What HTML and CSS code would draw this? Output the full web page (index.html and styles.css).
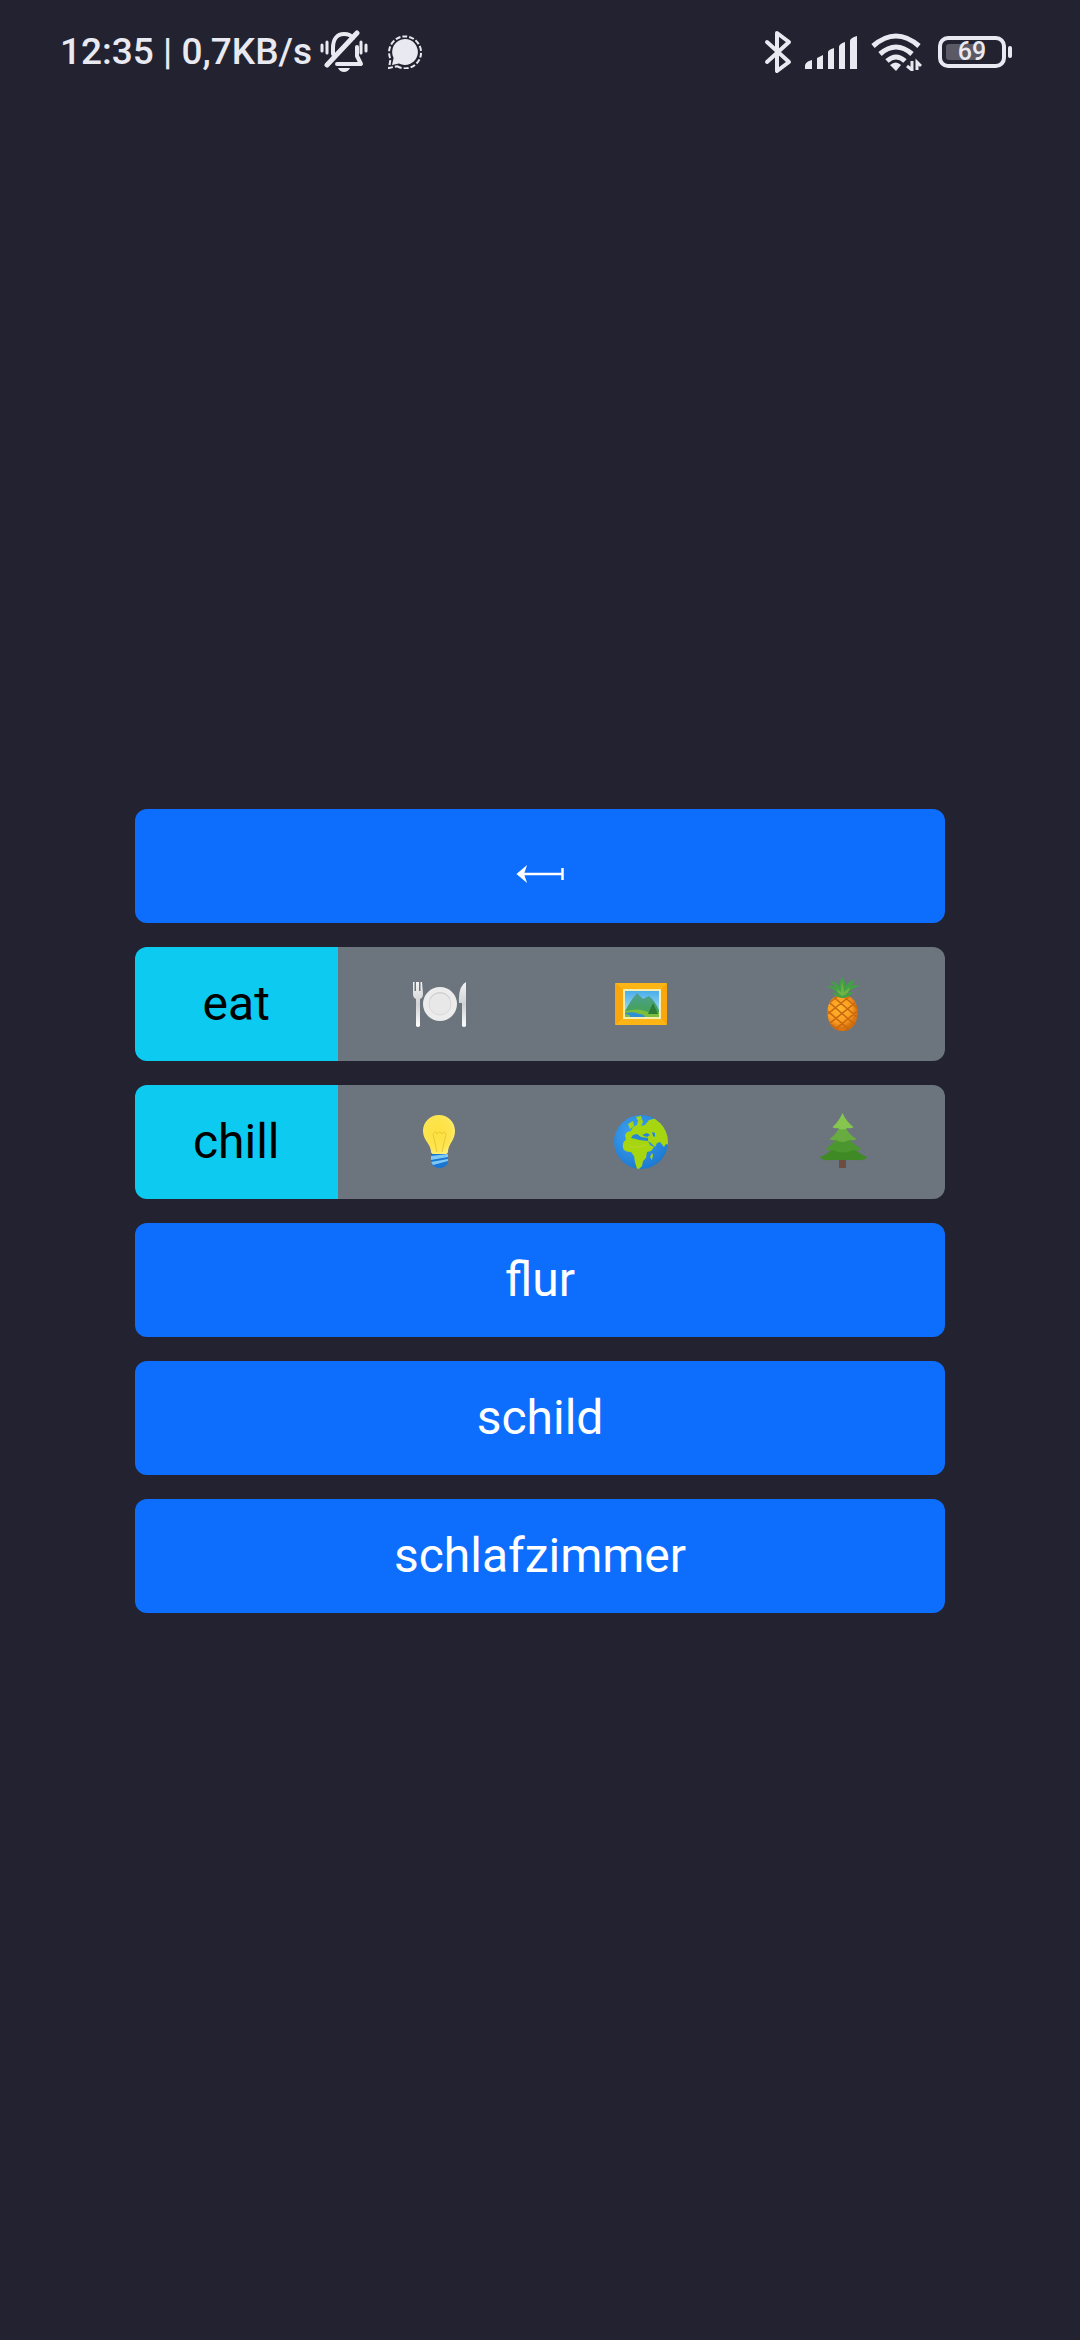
FILE: index.html
```html
<!DOCTYPE html>
<html lang="de">
<head>
<meta charset="utf-8">
<meta name="viewport" content="width=device-width, initial-scale=1">
<title>Licht</title>
<link rel="stylesheet" href="styles.css">
</head>
<body>
<header class="status">
  <div class="status-side">
    <span class="status-text">12:35 | 0,7KB/s</span>
    <svg class="bell" width="48" height="44" viewBox="0 0 48 44" fill="none" stroke="#e9e9f1" stroke-width="4" stroke-linecap="round" stroke-linejoin="round" aria-hidden="true">
      <path d="M13 24V18C13 9 17 4 24 4c4 0 7 1 9 4M37 17v9l4 8H17"/>
      <path d="M7 35 37 3" stroke-width="5"/>
      <path d="M2 15v6M7 12v11M41 12v11M46 15v6" stroke-width="3"/>
      <path d="M18 38h12q-2 4-6 4t-6-4z" fill="#e9e9f1" stroke="none"/>
    </svg>
    <svg class="chat" width="34" height="34" viewBox="0 0 34 34" aria-hidden="true">
      <path d="M17 4a13 13 0 1 1-6 24.600L4 30l1.600-7A13 13 0 0 1 17 4z" fill="#e9e9f1"/>
      <path d="M9 31.200A16 16 0 1 0 2.500 24L1 33z" fill="none" stroke="#e9e9f1" stroke-width="2" stroke-dasharray="5 2"/>
    </svg>
  </div>
  <div class="status-side">
    <svg width="28" height="44" viewBox="0 0 28 44" fill="none" stroke="#e9e9f1" stroke-width="4" stroke-linejoin="round" stroke-linecap="round" aria-hidden="true">
      <path d="M3 12 25 32 13 41V3l12 9L3 32"/>
    </svg>
    <svg class="signal" width="54" height="34" viewBox="0 0 54 34" fill="#e9e9f1" aria-hidden="true">
      <path d="M1 31q0-3 4-5l3-1v9H1zM13 23l6-3v14h-6zM24 17q0-2 6-4v21h-6zM35 12q0-3 6-5v27h-6zM46 6q0-3 7-5v33h-7z"/>
    </svg>
    <svg class="wifi" width="52" height="38" viewBox="0 0 52 38" fill="none" stroke="#e9e9f1" stroke-width="5" aria-hidden="true">
      <path d="M3 13Q26-7 49 13M10 21Q26 7 42 21M17 28Q26 20 35 28"/>
      <path d="M20 32q6-5 11 0l-5 6z" fill="#e9e9f1" stroke="none"/>
      <path d="M42 28v9l-5-4M47 37V29l4 4" stroke-width="3"/>
    </svg>
    <div class="battery">
      <span class="battery-case"><span class="battery-level"></span><span class="battery-text">69</span></span>
      <span class="battery-tip"></span>
    </div>
  </div>
</header>

<main class="menu">
  <button class="btn primary" type="button" aria-label="Back">
    <svg class="icon" viewBox="0 0 60 60" fill="none" stroke="#fff" stroke-width="2" aria-hidden="true">
      <path d="M10 38h42M52.500 32v12" stroke-width="2.500"/><path d="M8 38l7-6-2 6 2 6z" fill="#fff"/>
    </svg>
  </button>

  <div class="group">
    <button class="btn info" type="button">eat</button>
    <button class="btn secondary" type="button" aria-label="Plate">
      <svg class="icon" viewBox="0 0 60 60" aria-hidden="true">
        <defs><linearGradient id="steel" x2="0" y2="1"><stop stop-color="#f4f4f4"/><stop offset=".5" stop-color="#cfd1d3"/><stop offset="1" stop-color="#fff"/></linearGradient></defs>
        <path d="M4 8h1.500v9h1.500V8h3v9h1.500V8H13l1 12q0 4-3 5v27q-2 2-4 0V25q-3-1-3-5z" fill="url(#steel)"/>
        <circle cx="31" cy="30" r="17" fill="#ececec"/>
        <circle cx="31" cy="30" r="11" fill="#e8e8e8" stroke="#dadada"/>
        <path d="M21 25a11 11 0 0 1 20 0" fill="none" stroke="#cecece"/>
        <path d="M57 8v44q-2 2-4 0V29h-3q-1-17 7-21z" fill="url(#steel)"/>
      </svg>
    </button>
    <button class="btn secondary" type="button" aria-label="Picture">
      <svg class="icon" viewBox="0 0 60 60" aria-hidden="true">
        <defs><linearGradient id="sky" x2="0" y2="1"><stop stop-color="#4aaeea"/><stop offset="1" stop-color="#b9e5f5"/></linearGradient>
        <linearGradient id="hill" x2="0" y2="1"><stop stop-color="#4f9f94"/><stop offset="1" stop-color="#3fa447"/></linearGradient></defs>
        <rect x="4" y="9" width="52" height="42" rx="1" fill="#fdb515"/>
        <path d="M4 9l8 6v29l-8 7zM56 9l-6 6v29l6 7z" fill="#f9a60f"/>
        <rect x="12" y="15" width="38" height="30" fill="#f6edb0"/>
        <rect x="14" y="17" width="34" height="26" fill="url(#sky)"/>
        <path d="M14 37q5-9 8-13l4-5 6 6 6-3q6 5 10 14v7H14z" fill="url(#hill)"/>
        <path d="M14 37q14-3 20 0t14 1v5H14z" fill="#7cbd3e"/>
        <path d="M14 39q10-2 14 1 5 0 6 3H19q2-2-5-3z" fill="#2f8fd4"/>
        <path d="M42 29l5 11H37z" fill="#2c7a36"/>
      </svg>
    </button>
    <button class="btn secondary" type="button" aria-label="Pineapple">
      <svg class="icon" viewBox="0 0 60 60" aria-hidden="true">
        <defs><radialGradient id="fruit" cx=".4" cy=".4"><stop stop-color="#ffb62c"/><stop offset=".7" stop-color="#fb9c20"/><stop offset="1" stop-color="#d9740f"/></radialGradient>
        <clipPath id="body"><path d="M28.500 21c10 0 15 7 15 17 0 11-5 19-15 19s-15-8-15-19c0-10 5-17 15-17z"/></clipPath></defs>
        <g clip-path="url(#body)"><path d="M12 20h34v38H12z" fill="url(#fruit)"/>
        <path d="M10 44l16 14M10 34l28 24M10 24l36 31M16 20l32 27M28 21l20 17M47 24 10 54M36 22 10 43M24 22 10 33M47 34 18 58M47 44 30 58" stroke="#c8680f" stroke-width="1.500"/></g>
        <path d="M28 24q-7-1-10-6 4 1 6 2-4-6-12-7 4-2 9 0-3-5-6-6 7 0 11 6-1-6 2-10 4 4 3 10 3-6 10-7-2 3-4 6 4-2 9 0-9 2-12 7 3-1 5-1-4 6-11 6z" fill="#43a047"/>
        <path d="M28 22q-5-3-5-7l4 3 1-11 2 11 6-5q-1 7-8 9z" fill="#6fb344"/>
      </svg>
    </button>
  </div>

  <div class="group">
    <button class="btn info" type="button">chill</button>
    <button class="btn secondary" type="button" aria-label="Light bulb">
      <svg class="icon" viewBox="0 0 60 60" aria-hidden="true">
        <defs><radialGradient id="glass" cx=".45" cy=".45" r=".6"><stop stop-color="#fde03f"/><stop offset=".7" stop-color="#fde54f"/><stop offset="1" stop-color="#fff07c"/></radialGradient></defs>
        <path d="M22 41h17v10q-3 5-8.500 5T22 51z" fill="#1976d2"/>
        <path d="M22 44l17-2v3l-17 3zM22 50l17-3v2l-15 4z" fill="#81c9f5"/>
        <path d="M30 3c9 0 16 7 16 16 0 9-6 12-7 20q0 3-2 3H24q-2 0-2-3c-1-8-8-11-8-20 0-9 7-16 16-16z" fill="url(#glass)"/>
        <path d="M28 40l-4-18q3-4 4 0 3-4 5 0 2-4 4 0l-4 18" fill="none" stroke="#ecc738" stroke-width="1"/>
      </svg>
    </button>
    <button class="btn secondary" type="button" aria-label="Globe">
      <svg class="icon" viewBox="0 0 60 60" aria-hidden="true">
        <defs><radialGradient id="sea" cx=".4" cy=".35" r=".7"><stop stop-color="#42a5f5"/><stop offset="1" stop-color="#1b78cf"/></radialGradient>
        <clipPath id="disc"><circle cx="30" cy="30" r="27"/></clipPath></defs>
        <circle cx="30" cy="30" r="27" fill="url(#sea)"/>
        <g clip-path="url(#disc)" fill="#a5d610">
          <path d="M27 9l4-2 1 3-2 4 4-1 4-5 12-3 10 16-2 12-3-1-2 3-4-5-3 1-2 4-4-4-3-2 2 4 4 2-3 4-4 1-1 6-3 3-1 5-3 3h-2l-2-7-1-6-3-4q-7 0-8-4-1-6 3-8l-1-5 2-3 4-1 2-4 4-2z"/>
          <path d="M17 12l5-3 1 5-4 3zM25 5l5-1 1 3-4 2zM39 45l2-4 1 2-1 5z"/>
          <path d="M20 26l2-3 4-1 4 3 7 1v3l-9-1-3-1zM31 23l5-2 3 2-3 2zM41 20l3 1v4l-2-1z" fill="#2585d7"/>
          <path d="M18 34q8 3 17-1" fill="none" stroke="#c5cf37"/>
        </g>
      </svg>
    </button>
    <button class="btn secondary" type="button" aria-label="Tree">
      <svg class="icon" viewBox="0 0 60 60" aria-hidden="true">
        <path d="M25 44h7v12h-7z" fill="#6d4c41"/>
        <path d="M28.500 24C23 35 14 42 6 45q2 4 11 3h25q9 1 11-3-10-4-16-12z" fill="#3f8a24"/>
        <path d="M28.500 17q-6 13-17 20 3 2 7 1 10 5 21 0 4 1 8-1-13-7-19-20z" fill="#4b962f"/>
        <path d="M28.500 9q-5 13-13 18 3 2 6 1 7 4 14 0 4 1 7-1-10-6-14-18z" fill="#68ab40"/>
        <path d="M28.500 1q-4 9-10 14 2 2 5 1 5 3 10 0 4 1 6-1-7-5-11-14z" fill="#86c64f"/>
      </svg>
    </button>
  </div>

  <button class="btn primary" type="button">flur</button>
  <button class="btn primary" type="button">schild</button>
  <button class="btn primary" type="button">schlafzimmer</button>
</main>
</body>
</html>
```
FILE: styles.css
```css
* {
  box-sizing: border-box;
}

body {
  margin: 0;
  min-height: 100vh;
  display: flex;
  flex-direction: column;
  background: #232230;
  font-family: Roboto, "Liberation Sans", sans-serif;
}

.status {
  display: flex;
  justify-content: space-between;
  align-items: center;
  padding: 22px 68px 0 60px;
  height: 82px;
  color: #e9e9f1;
}

.status-side {
  display: flex;
  align-items: center;
}

.status-text {
  font-size: 37px;
  font-weight: 500;
  line-height: 44px;
}

.bell {
  margin-left: 8px;
}

.chat {
  margin-left: 20px;
}

.signal {
  margin-left: 12px;
}

.wifi {
  margin-left: 12px;
}

.battery {
  display: flex;
  align-items: center;
  gap: 2px;
  margin-left: 16px;
}

.battery-case {
  display: grid;
  align-items: center;
  width: 68px;
  height: 32px;
  padding: 4px;
  border: 4px solid #e9e9f1;
  border-radius: 10px;
}

.battery-level,
.battery-text {
  grid-area: 1 / 1;
}

.battery-level {
  width: 69%;
  height: 16px;
  border-radius: 3px;
  background: #5a5964;
}

.battery-text {
  font-size: 25px;
  font-weight: 500;
  line-height: 16px;
  text-align: center;
}

.battery-tip {
  width: 4px;
  height: 12px;
  border-radius: 2px;
  background: #e9e9f1;
}

.menu {
  flex: 1;
  display: flex;
  flex-direction: column;
  justify-content: center;
  gap: 24px;
  width: 75%;
  margin: 0 auto;
}

.btn {
  display: flex;
  align-items: center;
  justify-content: center;
  min-height: 114px;
  padding: 0;
  border: 0;
  border-radius: 12px;
  font-family: inherit;
  font-size: 48px;
  line-height: 72px;
}

.primary {
  background: #0d6efd;
  color: #fff;
}

.info {
  background: #0dcaf0;
  color: #000;
}

.secondary {
  background: #6c757d;
}

.group {
  display: grid;
  grid-template-columns: repeat(4, 1fr);
  border-radius: 12px;
  overflow: hidden;
}

.group .btn {
  border-radius: 0;
}

.icon {
  width: 60px;
  height: 60px;
}
```
